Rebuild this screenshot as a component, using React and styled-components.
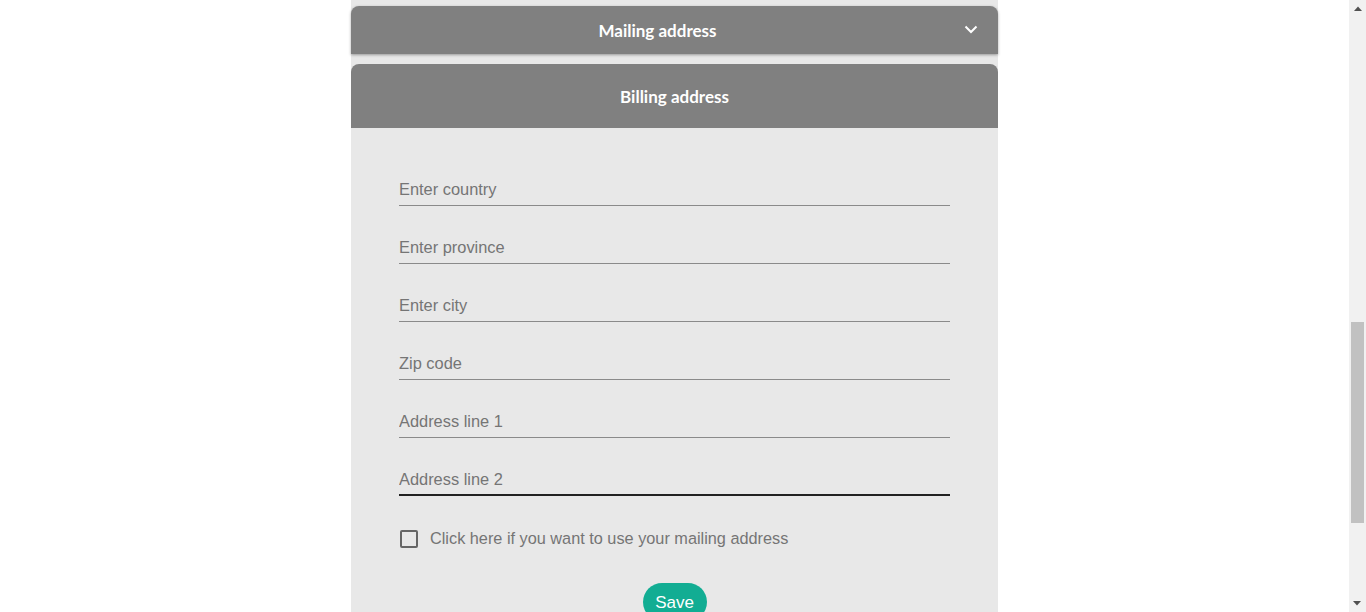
import styled, { createGlobalStyle } from 'styled-components';

const GlobalStyle = createGlobalStyle`
  html, body {
    margin: 0;
    padding: 0;
    background-color: #fff;
    overflow: hidden;
  }
  * {
    box-sizing: border-box;
  }
`;

const Page = styled.div`
  display: flex;
  width: 1366px;
  height: 612px;
  overflow: hidden;
`;

const Main = styled.main`
  flex: 1;
  display: flex;
  justify-content: center;
`;

const Card = styled.div`
  width: 647px;
  background-color: #e8e8e8;
  padding-top: 6px;
  display: flex;
  flex-direction: column;
  gap: 10px;
  & > * {
    flex-shrink: 0;
  }
`;

const Header = styled.div`
  display: flex;
  align-items: center;
  height: ${(p) => (p.$tall ? '64px' : '48px')};
  background-color: #808080;
  border-radius: 8px 8px 0 0;
  box-shadow: ${(p) => (p.$shadow ? '0 1px 3px rgba(0, 0, 0, 0.35)' : 'none')};
  color: #fff;
  font-family: Lato, 'Open Sans', sans-serif;
  font-weight: 700;
  font-size: 17px;
`;

const Title = styled.h2`
  flex: 1;
  margin: 0;
  text-align: center;
  font-size: inherit;
  font-weight: inherit;
`;

const Chevron = styled.span`
  width: 34px;
  display: flex;
  align-items: center;
  margin-top: -2px;
`;

const Form = styled.form`
  display: flex;
  flex-direction: column;
  padding: 46px 48px 0;
`;

const Fields = styled.div`
  display: flex;
  flex-direction: column;
  gap: 26px;
`;

const Input = styled.input`
  height: 32px;
  width: 100%;
  border: none;
  border-bottom: 1px solid ${(p) => (p.$active ? '#212121' : '#8a8a8a')};
  box-shadow: ${(p) => (p.$active ? 'inset 0 -1px 0 #212121' : 'none')};
  background: transparent;
  padding: 4px 0 5px;
  font-family: 'Liberation Sans', Arial, sans-serif;
  font-size: 16.4px;
  color: #333;
  outline: none;
  &::placeholder {
    color: #757575;
  }
`;

const CheckRow = styled.label`
  display: flex;
  align-items: center;
  gap: 12px;
  margin-top: 33px;
  padding-left: 1px;
  font-family: 'Liberation Sans', Arial, sans-serif;
  font-size: 16.3px;
  color: #757575;
`;

const Box = styled.span`
  width: 18px;
  height: 18px;
  border: 2px solid #666;
  border-radius: 2px;
`;

const SaveButton = styled.button`
  align-self: center;
  margin-top: 35px;
  width: 64px;
  height: 38px;
  border: none;
  border-radius: 19px;
  background-color: #12ad93;
  color: #fff;
  font-family: 'Liberation Sans', Arial, sans-serif;
  font-size: 17px;
  padding: 2px 0 0;
`;

const Scrollbar = styled.div`
  width: 17px;
  background-color: #f1f1f1;
  display: flex;
  flex-direction: column;
  align-items: center;
`;

const Arrow = styled.div`
  height: 17px;
  width: 17px;
  display: flex;
  align-items: center;
  justify-content: center;
  transform: ${(p) => (p.$down ? 'rotate(180deg)' : 'none')};
`;

const Track = styled.div`
  flex: 1;
  width: 100%;
  display: flex;
  justify-content: center;
`;

const Thumb = styled.div`
  margin-top: 305px;
  width: 13px;
  height: 201px;
  background-color: #c1c1c1;
`;

const fields = [
  'Enter country',
  'Enter province',
  'Enter city',
  'Zip code',
  'Address line 1',
  'Address line 2',
];

function ArrowIcon() {
  return (
    <svg width="8" height="5" viewBox="0 0 8 5">
      <path d="M0 5 L4 0.5 L8 5 Z" fill="#505050" />
    </svg>
  );
}

export default function App() {
  return (
    <>
      <GlobalStyle />
      <Page>
        <Main>
          <Card>
            <Header $shadow>
              <Title>Mailing address</Title>
              <Chevron>
                <svg width="14" height="9" viewBox="0 0 14 9">
                  <path
                    d="M1.5 1.5 L7 7 L12.5 1.5"
                    fill="none"
                    stroke="#fff"
                    strokeWidth="2"
                  />
                </svg>
              </Chevron>
            </Header>
            <div>
              <Header $tall>
                <Title>Billing address</Title>
              </Header>
              <Form onSubmit={(e) => e.preventDefault()}>
                <Fields>
                  {fields.map((f, i) => (
                    <Input
                      key={f}
                      placeholder={f}
                      $active={i === fields.length - 1}
                    />
                  ))}
                </Fields>
                <CheckRow>
                  <Box />
                  Click here if you want to use your mailing address
                </CheckRow>
                <SaveButton type="submit">Save</SaveButton>
              </Form>
            </div>
          </Card>
        </Main>
        <Scrollbar>
          <Arrow>
            <ArrowIcon />
          </Arrow>
          <Track>
            <Thumb />
          </Track>
          <Arrow $down>
            <ArrowIcon />
          </Arrow>
        </Scrollbar>
      </Page>
    </>
  );
}
